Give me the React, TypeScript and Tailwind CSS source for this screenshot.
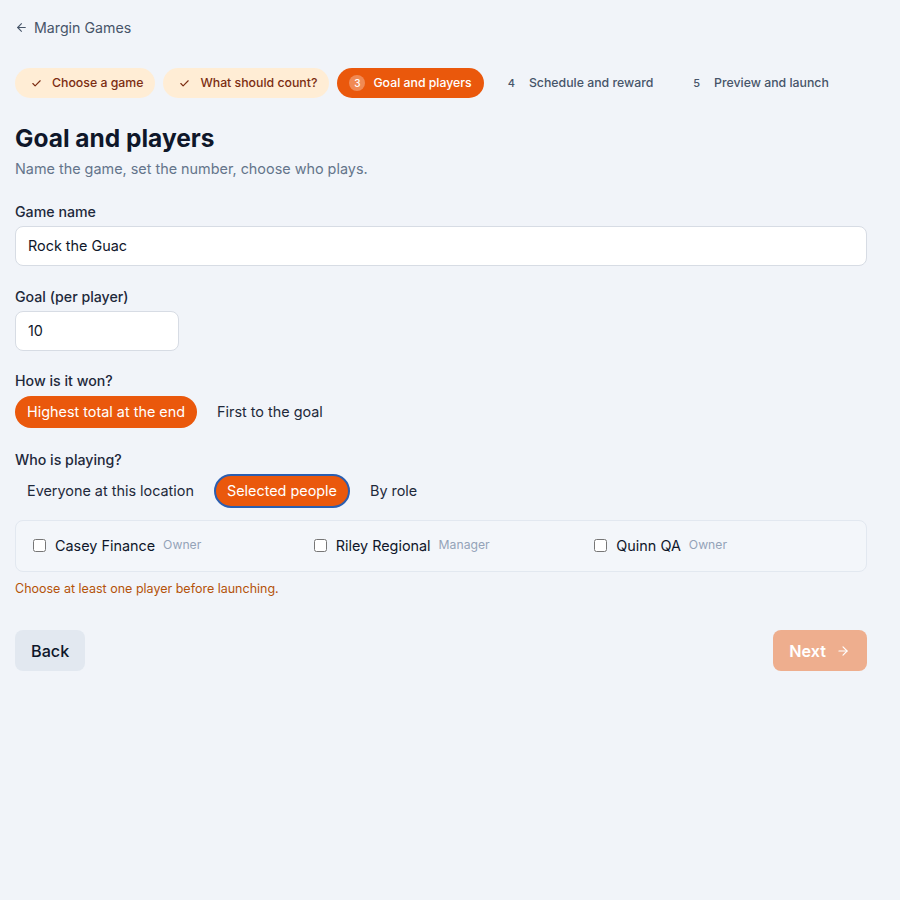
import React, { useState } from 'react';
import { ArrowLeft, ArrowRight, Check } from 'lucide-react';

// Wizard step 3 of the Margin Games setup flow.
const STEPS = [
  { n: 1, label: 'Choose a game' },
  { n: 2, label: 'What should count?' },
  { n: 3, label: 'Goal and players' },
  { n: 4, label: 'Schedule and reward' },
  { n: 5, label: 'Preview and launch' },
];
const CURRENT = 3;

const PEOPLE = [
  { id: 'casey', name: 'Casey Finance', role: 'Owner' },
  { id: 'riley', name: 'Riley Regional', role: 'Manager' },
  { id: 'quinn', name: 'Quinn QA', role: 'Owner' },
];

const Stepper: React.FC = () => (
  <div className="flex items-center gap-2 whitespace-nowrap">
    {STEPS.map(s => {
      if (s.n < CURRENT) {
        return (
          <span key={s.n} className="inline-flex items-center gap-[10px] h-[30px] pl-4 pr-3 rounded-full bg-[#ffedd5] text-[#7c2d12] text-[12.3px] font-medium">
            <Check size={11} strokeWidth={2.5} className="text-[#7c2d12]" />
            {s.label}
          </span>
        );
      }
      if (s.n === CURRENT) {
        return (
          <span key={s.n} className="inline-flex items-center gap-2 h-[30px] pl-3 pr-3 rounded-full bg-[#ea580c] text-white text-[12.3px] font-medium">
            <span className="w-4 h-4 rounded-full bg-white/30 text-[10px] flex items-center justify-center">{s.n}</span>
            {s.label}
          </span>
        );
      }
      return (
        <span key={s.n} className="inline-flex items-center gap-3.5 h-[30px] px-4 text-[12.3px] font-medium text-[#475569]">
          <span className="text-[11px]">{s.n}</span>
          {s.label}
        </span>
      );
    })}
  </div>
);

export default function App() {
  const [name, setName] = useState('Rock the Guac');
  const [goal, setGoal] = useState('10');
  const [winMode, setWinMode] = useState<'total' | 'first'>('total');
  const [who, setWho] = useState<'everyone' | 'selected' | 'role'>('selected');
  const [picked, setPicked] = useState<string[]>([]);

  const toggle = (id: string) =>
    setPicked(p => (p.includes(id) ? p.filter(x => x !== id) : [...p, id]));

  const pill = (active: boolean) =>
    `h-8 px-3 rounded-full text-[14.4px] ${active ? 'bg-[#ea580c] text-white' : 'text-[#1e293b]'}`;

  return (
    <div className="min-h-screen bg-[#f1f4f9] px-[15px] pt-[16px] pb-10 font-['Inter',sans-serif]">
      <div className="max-w-[852px]">
        <a className="inline-flex items-center gap-1.5 text-[14.2px] leading-5 text-[#475569]">
          <ArrowLeft size={13} strokeWidth={2} />
          Margin Games
        </a>

        <div className="mt-[28px]">
          <Stepper />
        </div>

        <h1 className="mt-[24px] text-[24.5px] leading-8 font-bold text-[#0f172a]">Goal and players</h1>
        <p className="mt-1 text-[14.4px] text-[#64748b]">Name the game, set the number, choose who plays.</p>

        <div className="mt-[22px]">
          <label className="block text-[14.2px] leading-5 font-medium text-[#1e293b]">Game name</label>
          <input
            value={name}
            onChange={e => setName(e.target.value)}
            className="mt-[4px] w-full h-10 px-3 rounded-lg border border-[#d7dce4] bg-white text-[14.4px] text-[#0f172a] outline-none"
          />
        </div>

        <div className="mt-[21px]">
          <label className="block text-[14.2px] leading-5 font-medium text-[#1e293b]">Goal (per player)</label>
          <input
            value={goal}
            onChange={e => setGoal(e.target.value)}
            className="mt-[4px] w-[164px] h-10 px-3 rounded-lg border border-[#d7dce4] bg-white text-[14.4px] text-[#0f172a] outline-none"
          />
        </div>

        <div className="mt-[20px]">
          <label className="block text-[14.2px] leading-5 font-medium text-[#1e293b]">How is it won?</label>
          <div className="mt-[5px] flex items-center gap-2">
            <button onClick={() => setWinMode('total')} className={pill(winMode === 'total')}>Highest total at the end</button>
            <button onClick={() => setWinMode('first')} className={pill(winMode === 'first')}>First to the goal</button>
          </div>
        </div>

        <div className="mt-[22px]">
          <label className="block text-[14.2px] leading-5 font-medium text-[#1e293b]">Who is playing?</label>
          <div className="mt-[4px] flex items-center gap-2">
            <button onClick={() => setWho('everyone')} className={`${pill(who === 'everyone')} h-[34px]`}>Everyone at this location</button>
            <button onClick={() => setWho('selected')} className={`${pill(who === 'selected')} h-[34px] !px-[11px] border-2 border-[#2b5eb0]`}>Selected people</button>
            <button onClick={() => setWho('role')} className={`${pill(who === 'role')} h-[34px]`}>By role</button>
          </div>

          <div className="mt-3 grid grid-cols-3 gap-6 px-4 h-[52px] items-center rounded-lg border border-[#e2e8f0] bg-[#f3f6fa]">
            {PEOPLE.map(p => (
              <label key={p.id} className="flex items-center gap-2">
                <input
                  type="checkbox"
                  checked={picked.includes(p.id)}
                  onChange={() => toggle(p.id)}
                  className="w-[13px] h-[13px] ml-[1px] mr-[1px]"
                />
                <span className="text-[14.4px] text-[#0f172a]">{p.name}</span>
                <span className="text-[12.2px] text-[#94a3b8]">{p.role}</span>
              </label>
            ))}
          </div>
          <p className="mt-[8px] text-[12.5px] text-[#b45309]">Choose at least one player before launching.</p>
        </div>

        <div className="mt-[32px] flex items-center justify-between">
          <button className="h-[41px] px-4 rounded-lg bg-[#e2e8f0] text-[16.2px] font-medium text-[#0f172a]">Back</button>
          <button disabled className="h-[41px] pl-4 pr-[17px] rounded-lg bg-[#ea580c]/45 text-white text-[16.2px] font-semibold inline-flex items-center gap-2.5">
            Next
            <ArrowRight size={14} strokeWidth={2} />
          </button>
        </div>
      </div>
    </div>
  );
}
